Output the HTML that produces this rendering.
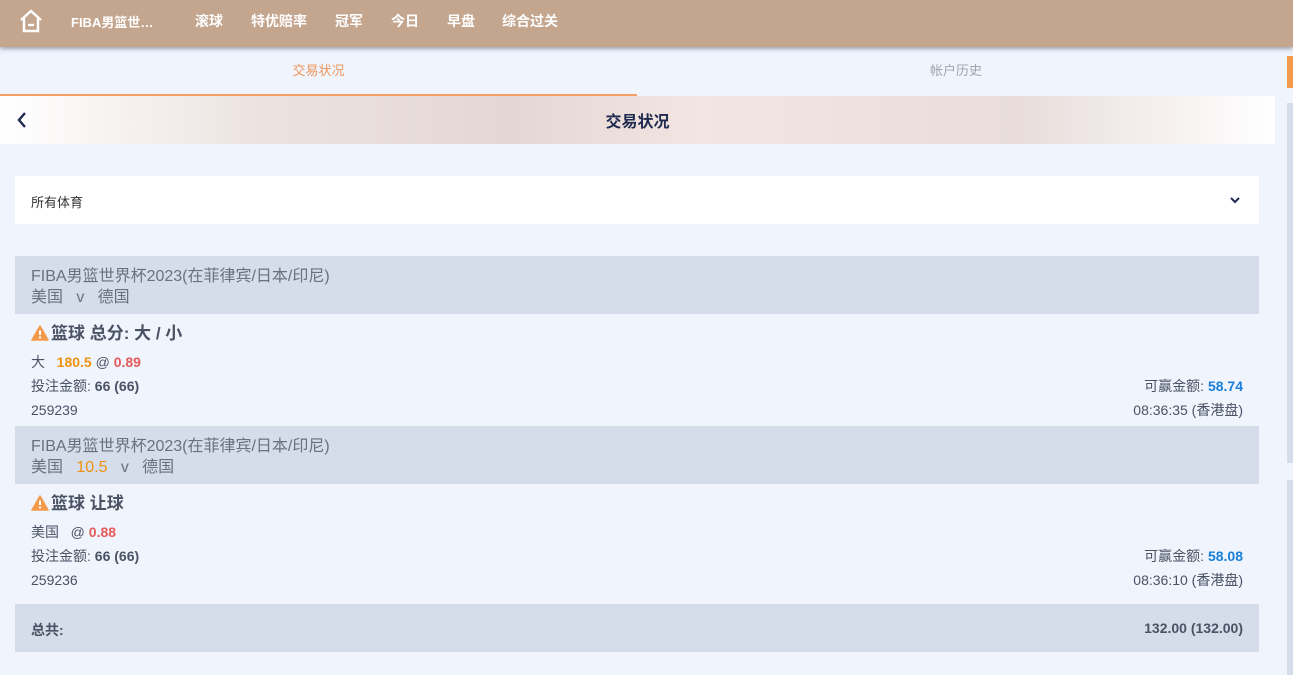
<!DOCTYPE html>
<html><head><meta charset="utf-8"><style>
*{margin:0;padding:0;box-sizing:border-box}
body{width:1293px;height:675px;overflow:hidden;background:#eff4fd;font-family:"Liberation Sans","Noto Sans CJK SC",sans-serif;position:relative;color:#4a5263}
.hdr{position:absolute;left:0;top:0;width:1293px;height:47px;background:#c4a68f;box-shadow:0 2px 4px rgba(80,80,100,.5);color:#fff;font-size:14px;font-weight:bold}
.hdr span{position:absolute;top:11px}
.tabs{position:absolute;top:48px;left:0;width:1275px;height:48px;font-size:13px}
.tab1{position:absolute;left:0;width:637px;height:48px;text-align:center;line-height:46px;color:#f0965a;border-bottom:2px solid #f4a066}
.tab2{position:absolute;left:637px;width:638px;height:48px;text-align:center;line-height:46px;color:#a0a4ae}
.ban{position:absolute;top:96px;left:0;width:1275px;height:48px;background:linear-gradient(90deg,#fff 0%,#ece3e0 20%,#e3d7d4 40%,#f3e5e1 55%,#e8dddb 80%,#fff 100%)}
.ban .t{position:absolute;left:0;width:1275px;text-align:center;top:12px;font-size:16px;font-weight:bold;color:#1f2a50}
.dd{position:absolute;left:15px;top:176px;width:1244px;height:48px;background:#fff;font-size:13px;color:#333}
.gh{position:absolute;left:15px;width:1244px;height:58px;background:#d5dcea;font-size:16px;color:#6a7080;padding:10px 16px;line-height:21px}
.row{position:absolute;font-size:14px;line-height:16px}
.ttl{position:absolute;left:31px;font-size:17px;font-weight:bold;color:#4a5263;line-height:20px}
.ttl svg{vertical-align:-2px;margin-right:2px}
.sb{position:absolute;left:1287px;width:6px;background:#d5dcea}
</style></head><body>
<div class="hdr">
<svg style="position:absolute;left:18px;top:8px" width="26" height="26" viewBox="0 0 26 26" fill="none" stroke="#fff" stroke-width="2.4"><path d="M3 12 L13 3 L23 12 M6 10 V23 H20 V10"/><path d="M10 17 H16"/></svg>
<span style="left:71px;font-size:13px;top:12px">FIBA男篮世…</span>
<span style="left:195px">滚球</span><span style="left:251px">特优赔率</span><span style="left:335px">冠军</span><span style="left:391px">今日</span><span style="left:447px">早盘</span><span style="left:502px">综合过关</span>
</div>
<div class="tabs"><div class="tab1">交易状况</div><div class="tab2">帐户历史</div></div>
<div class="ban"><svg style="position:absolute;left:16px;top:15px" width="12" height="18" viewBox="0 0 12 18"><path d="M9 2 L3 9 L9 16" stroke="#1f2a50" stroke-width="2.4" fill="none"/></svg><div class="t">交易状况</div></div>
<div class="dd"><span style="position:absolute;left:16px;top:16px">所有体育</span><svg style="position:absolute;left:1214px;top:20px" width="12" height="9" viewBox="0 0 12 9"><path d="M2 2 L6 6 L10 2" stroke="#1f2a50" stroke-width="2" fill="none"/></svg></div>

<div class="gh" style="top:256px">FIBA男篮世界杯2023(在菲律宾/日本/印尼)<br>美国 &nbsp; v &nbsp; 德国</div>
<div class="ttl" style="top:324px"><svg width="18" height="16" viewBox="0 0 18 16"><path d="M9 1 L17 15 H1 Z" fill="#f59a4a" stroke="#f59a4a" stroke-linejoin="round" stroke-width="1.5"/><path d="M9 5.5 V10" stroke="#fff" stroke-width="2"/><circle cx="9" cy="12.5" r="1.1" fill="#fff"/></svg>篮球 总分: 大 / 小</div>
<div class="row" style="left:31px;top:354px">大 &nbsp; <b style="color:#f0920f">180.5</b> @ <b style="color:#e55a5a">0.89</b></div>
<div class="row" style="left:31px;top:378px">投注金额: <b>66 (66)</b></div>
<div class="row" style="right:50px;top:378px">可赢金额: <b style="color:#1a7fd8">58.74</b></div>
<div class="row" style="left:31px;top:402px">259239</div>
<div class="row" style="right:50px;top:402px">08:36:35 (香港盘)</div>

<div class="gh" style="top:426px">FIBA男篮世界杯2023(在菲律宾/日本/印尼)<br>美国 &nbsp; <span style="color:#f0920f">10.5</span> &nbsp; v &nbsp; 德国</div>
<div class="ttl" style="top:494px"><svg width="18" height="16" viewBox="0 0 18 16"><path d="M9 1 L17 15 H1 Z" fill="#f59a4a" stroke="#f59a4a" stroke-linejoin="round" stroke-width="1.5"/><path d="M9 5.5 V10" stroke="#fff" stroke-width="2"/><circle cx="9" cy="12.5" r="1.1" fill="#fff"/></svg>篮球 让球</div>
<div class="row" style="left:31px;top:524px">美国 &nbsp; @ <b style="color:#e55a5a">0.88</b></div>
<div class="row" style="left:31px;top:548px">投注金额: <b>66 (66)</b></div>
<div class="row" style="right:50px;top:548px">可赢金额: <b style="color:#1a7fd8">58.08</b></div>
<div class="row" style="left:31px;top:572px">259236</div>
<div class="row" style="right:50px;top:572px">08:36:10 (香港盘)</div>

<div style="position:absolute;left:15px;top:604px;width:1244px;height:48px;background:#d5dcea;font-size:14px;font-weight:bold;color:#4a5263"><span style="position:absolute;left:16px;top:16px">总共:</span><span style="position:absolute;right:16px;top:16px">132.00 (132.00)</span></div>

<div class="sb" style="top:56px;height:32px;background:#f59a4a"></div>
<div class="sb" style="top:103px;height:360px"></div>
<div class="sb" style="top:480px;height:195px"></div>
</body></html>
